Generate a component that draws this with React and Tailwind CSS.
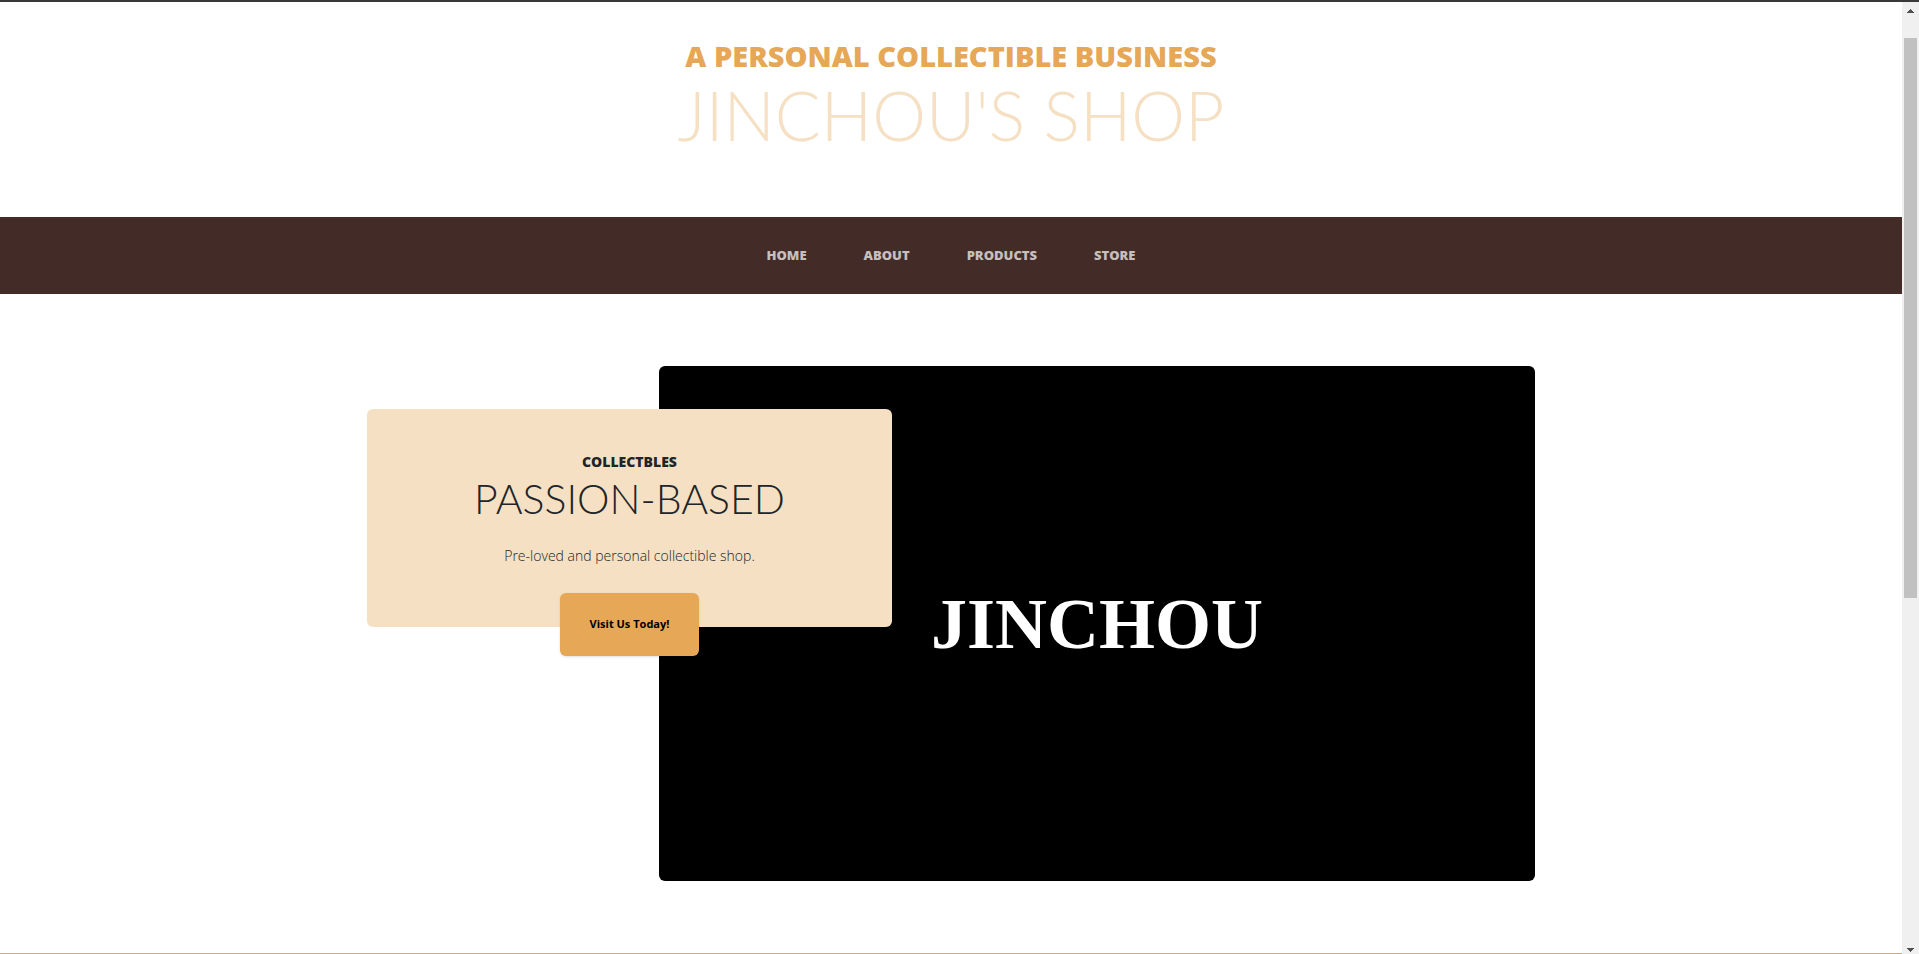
const links = ['Home', 'About', 'Products', 'Store'];

function Header() {
  return (
    <header className="flex h-[215px] flex-col items-center pt-9 text-center uppercase">
      <h1 className="flex flex-col items-center">
        <span className="text-[29px] leading-[36px] font-extrabold text-[#e6a756]">A Personal Collectible Business</span>
        <span className="font-['Lato','Open_Sans',sans-serif] text-[68px] leading-[82px] font-light text-[#f5e0c3]">Jinchou's Shop</span>
      </h1>
    </header>
  );
}

function Nav() {
  return (
    <nav className="bg-[#432c27] py-6">
      <ul className="flex justify-center gap-[57px]">
        {links.map((l) => (
          <li key={l}>
            <a href={'#' + l.toLowerCase()} className="block text-[13px] leading-[29px] font-extrabold text-[#c6bfbd] uppercase">{l}</a>
          </li>
        ))}
      </ul>
    </nav>
  );
}

function Hero() {
  return (
    <section className="mx-auto my-[72px] grid w-full max-w-[1168px] grid-cols-[292fr_233fr_643fr] items-start">
      <div className="col-start-2 col-end-4 row-start-1 flex aspect-[876/515] items-center justify-center rounded-md bg-black font-['Liberation_Serif',serif] text-[72px] leading-none font-bold text-white">
        JINCHOU
      </div>
      <div className="z-10 col-start-1 col-end-3 row-start-1 mt-[43px] flex flex-col items-center rounded-md bg-[#f5e0c3] pt-10 text-center text-[#212529]">
        <h2 className="flex flex-col items-center uppercase">
          <span className="text-[14px] leading-[26px] font-extrabold">Collectbles</span>
          <span className="font-['Lato','Open_Sans',sans-serif] text-[41px] leading-[48px] font-light">Passion-Based</span>
        </h2>
        <p className="mt-5 text-[14px] leading-[26px] font-light">Pre-loved and personal collectible shop.</p>
        <button type="button" className="mt-[24px] -mb-[29px] h-[63px] w-[139px] rounded-md bg-[#e6a756] text-[11px] font-bold text-black shadow">Visit Us Today!</button>
      </div>
    </section>
  );
}

function ScrollRail() {
  return (
    <div aria-hidden="true" className="flex w-[17px] shrink-0 flex-col items-center bg-[#f0f0f0] pt-[7px] pb-[2px]">
      <svg width="7" height="4" viewBox="0 0 7 4" shapeRendering="crispEdges"><path d="M3 0h1v1h1v1h1v1h1v1H0V3h1V2h1V1h1z" fill="#505050" /></svg>
      <div className="mt-[25px] h-[560px] w-[13px] bg-[#c1c1c1]" />
      <svg className="mt-auto" width="7" height="4" viewBox="0 0 7 4" shapeRendering="crispEdges"><path d="M0 0h7v1H6v1H5v1H4v1H3V3H2V2H1V1H0z" fill="#505050" /></svg>
    </div>
  );
}

export default function App() {
  return (
    <div className="flex min-h-screen flex-col border-t-2 border-[#3a3838] bg-white font-['Open_Sans','Noto_Sans',sans-serif]">
      <div className="flex grow">
        <main className="flex min-w-0 grow flex-col">
          <Header />
          <Nav />
          <Hero />
          <div className="mt-auto h-px bg-[#e6a756]" />
        </main>
        <ScrollRail />
      </div>
    </div>
  );
}
